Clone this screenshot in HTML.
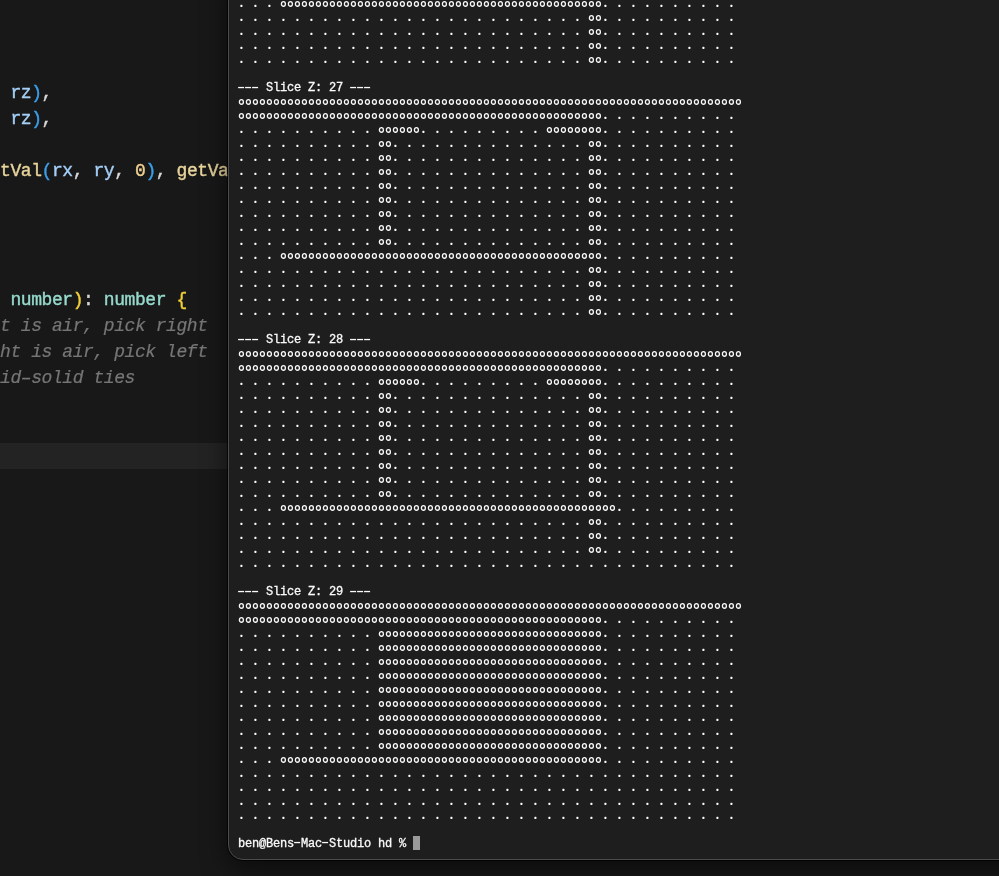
<!DOCTYPE html>
<html><head><meta charset="utf-8">
<style>
html,body{margin:0;padding:0;}
body{width:999px;height:876px;overflow:hidden;position:relative;background:#181818;}
#editor{position:absolute;left:0;top:0;width:999px;height:876px;background:#181818;overflow:hidden;}
#hl{position:absolute;left:0;top:443px;width:999px;height:26px;background:#232323;}
#code{position:absolute;left:0.4px;top:0;font-family:"Liberation Mono",monospace;font-size:18.0px;letter-spacing:-0.420px;line-height:26px;white-space:pre;color:#cccccc;-webkit-text-stroke:0.4px currentColor;will-change:transform;}
.cl{position:absolute;left:0;height:26px;}
.v{color:#a4d0f8} .b{color:#3a9ee8} .p{color:#d8d8d8} .f{color:#e8d49c} .n{color:#efd091}
.t{color:#96dacd} .g{color:#f2cf3a} .c{color:#767676;font-style:italic;-webkit-text-stroke:0.2px currentColor}
#shadow{position:absolute;left:229px;top:-40px;width:900px;height:899px;border-radius:15px;box-shadow:0 8px 24px 3px rgba(0,0,0,0.5);}
#term{position:absolute;left:228px;top:-40px;width:900px;height:900px;box-sizing:border-box;border:1px solid #4c4c4c;border-radius:15px;background:#1e1e1e;overflow:hidden;box-shadow:0 0 0 1px rgba(0,0,0,0.7);}
#tt{position:absolute;left:9px;top:35.97px;font-family:"Liberation Mono",monospace;font-size:11.4px;letter-spacing:0.160px;line-height:14px;white-space:pre;color:#fafafa;-webkit-text-stroke:0.2px currentColor;will-change:transform;}
.l{height:14px;}
.h{-webkit-text-stroke:0.3px currentColor;font-size:12px;letter-spacing:-0.2px;}
#vox{position:absolute;left:0;top:0;}
.cur{display:inline-block;width:7px;height:14px;background:#9a9a9a;vertical-align:-3px;}
</style></head><body>
<div id="editor"><div id="hl"></div><div id="code"><div class="cl" style="top:80.21px"><span class="v"> rz</span><span class="b">)</span><span class="p">,</span></div><div class="cl" style="top:106.06px"><span class="v"> rz</span><span class="b">)</span><span class="p">,</span></div><div class="cl" style="top:157.76px"><span class="f">tVal</span><span class="b">(</span><span class="v">rx</span><span class="p">, </span><span class="v">ry</span><span class="p">, </span><span class="n">0</span><span class="b">)</span><span class="p">, </span><span class="f">getVa</span></div><div class="cl" style="top:287.01px"><span class="t"> number</span><span class="g">)</span><span class="p">: </span><span class="t">number </span><span class="g">{</span></div><div class="cl" style="top:312.86px"><span class="c">t is air, pick right</span></div><div class="cl" style="top:338.71px"><span class="c">ht is air, pick left</span></div><div class="cl" style="top:364.56px"><span class="c">id–solid ties</span></div></div></div>
<div id="shadow"></div>
<div id="term"><div id="tt"><div class="l">&nbsp;</div><div class="l">&nbsp;</div><div class="l">&nbsp;</div><div class="l">&nbsp;</div><div class="l">&nbsp;</div><div class="l">&nbsp;</div><div class="l h">    Slice Z: 27    </div><div class="l">&nbsp;</div><div class="l">&nbsp;</div><div class="l">&nbsp;</div><div class="l">&nbsp;</div><div class="l">&nbsp;</div><div class="l">&nbsp;</div><div class="l">&nbsp;</div><div class="l">&nbsp;</div><div class="l">&nbsp;</div><div class="l">&nbsp;</div><div class="l">&nbsp;</div><div class="l">&nbsp;</div><div class="l">&nbsp;</div><div class="l">&nbsp;</div><div class="l">&nbsp;</div><div class="l">&nbsp;</div><div class="l">&nbsp;</div><div class="l h">    Slice Z: 28    </div><div class="l">&nbsp;</div><div class="l">&nbsp;</div><div class="l">&nbsp;</div><div class="l">&nbsp;</div><div class="l">&nbsp;</div><div class="l">&nbsp;</div><div class="l">&nbsp;</div><div class="l">&nbsp;</div><div class="l">&nbsp;</div><div class="l">&nbsp;</div><div class="l">&nbsp;</div><div class="l">&nbsp;</div><div class="l">&nbsp;</div><div class="l">&nbsp;</div><div class="l">&nbsp;</div><div class="l">&nbsp;</div><div class="l">&nbsp;</div><div class="l h">    Slice Z: 29    </div><div class="l">&nbsp;</div><div class="l">&nbsp;</div><div class="l">&nbsp;</div><div class="l">&nbsp;</div><div class="l">&nbsp;</div><div class="l">&nbsp;</div><div class="l">&nbsp;</div><div class="l">&nbsp;</div><div class="l">&nbsp;</div><div class="l">&nbsp;</div><div class="l">&nbsp;</div><div class="l">&nbsp;</div><div class="l">&nbsp;</div><div class="l">&nbsp;</div><div class="l">&nbsp;</div><div class="l">&nbsp;</div><div class="l">&nbsp;</div><div class="l h" style="position:relative;top:-1px">ben@Bens Mac Studio hd % <span class="cur"></span></div></div></div>
<svg id="vox" width="999" height="876" viewBox="0 0 999 876" fill="#fafafa"><defs><pattern id="po" patternUnits="userSpaceOnUse" x="238" y="10" width="7" height="14"><ellipse cx="3.4" cy="7.9" rx="2.0" ry="2.35" fill="none" stroke="#fafafa" stroke-width="1.3"/></pattern><pattern id="pd" patternUnits="userSpaceOnUse" x="238" y="10" width="14" height="14"><rect x="2.30" y="8.70" width="2.2" height="2.2" rx="0.7" fill="#fafafa"/></pattern></defs><rect x="238" y="-4" width="42" height="14" fill="url(#pd)"/><rect x="280" y="-4" width="322" height="14" fill="url(#po)"/><rect x="602" y="-4" width="140" height="14" fill="url(#pd)"/><rect x="238" y="10" width="350" height="14" fill="url(#pd)"/><rect x="588" y="10" width="14" height="14" fill="url(#po)"/><rect x="602" y="10" width="140" height="14" fill="url(#pd)"/><rect x="238" y="24" width="350" height="14" fill="url(#pd)"/><rect x="588" y="24" width="14" height="14" fill="url(#po)"/><rect x="602" y="24" width="140" height="14" fill="url(#pd)"/><rect x="238" y="38" width="350" height="14" fill="url(#pd)"/><rect x="588" y="38" width="14" height="14" fill="url(#po)"/><rect x="602" y="38" width="140" height="14" fill="url(#pd)"/><rect x="238" y="52" width="350" height="14" fill="url(#pd)"/><rect x="588" y="52" width="14" height="14" fill="url(#po)"/><rect x="602" y="52" width="140" height="14" fill="url(#pd)"/><rect x="238.1" y="86.9" width="6" height="1.3"/><rect x="245.1" y="86.9" width="6" height="1.3"/><rect x="252.1" y="86.9" width="6" height="1.3"/><rect x="350.1" y="86.9" width="6" height="1.3"/><rect x="357.1" y="86.9" width="6" height="1.3"/><rect x="364.1" y="86.9" width="6" height="1.3"/><rect x="238" y="94" width="504" height="14" fill="url(#po)"/><rect x="238" y="108" width="364" height="14" fill="url(#po)"/><rect x="602" y="108" width="140" height="14" fill="url(#pd)"/><rect x="238" y="122" width="140" height="14" fill="url(#pd)"/><rect x="378" y="122" width="42" height="14" fill="url(#po)"/><rect x="420" y="122" width="126" height="14" fill="url(#pd)"/><rect x="546" y="122" width="56" height="14" fill="url(#po)"/><rect x="602" y="122" width="140" height="14" fill="url(#pd)"/><rect x="238" y="136" width="140" height="14" fill="url(#pd)"/><rect x="378" y="136" width="14" height="14" fill="url(#po)"/><rect x="392" y="136" width="196" height="14" fill="url(#pd)"/><rect x="588" y="136" width="14" height="14" fill="url(#po)"/><rect x="602" y="136" width="140" height="14" fill="url(#pd)"/><rect x="238" y="150" width="140" height="14" fill="url(#pd)"/><rect x="378" y="150" width="14" height="14" fill="url(#po)"/><rect x="392" y="150" width="196" height="14" fill="url(#pd)"/><rect x="588" y="150" width="14" height="14" fill="url(#po)"/><rect x="602" y="150" width="140" height="14" fill="url(#pd)"/><rect x="238" y="164" width="140" height="14" fill="url(#pd)"/><rect x="378" y="164" width="14" height="14" fill="url(#po)"/><rect x="392" y="164" width="196" height="14" fill="url(#pd)"/><rect x="588" y="164" width="14" height="14" fill="url(#po)"/><rect x="602" y="164" width="140" height="14" fill="url(#pd)"/><rect x="238" y="178" width="140" height="14" fill="url(#pd)"/><rect x="378" y="178" width="14" height="14" fill="url(#po)"/><rect x="392" y="178" width="196" height="14" fill="url(#pd)"/><rect x="588" y="178" width="14" height="14" fill="url(#po)"/><rect x="602" y="178" width="140" height="14" fill="url(#pd)"/><rect x="238" y="192" width="140" height="14" fill="url(#pd)"/><rect x="378" y="192" width="14" height="14" fill="url(#po)"/><rect x="392" y="192" width="196" height="14" fill="url(#pd)"/><rect x="588" y="192" width="14" height="14" fill="url(#po)"/><rect x="602" y="192" width="140" height="14" fill="url(#pd)"/><rect x="238" y="206" width="140" height="14" fill="url(#pd)"/><rect x="378" y="206" width="14" height="14" fill="url(#po)"/><rect x="392" y="206" width="196" height="14" fill="url(#pd)"/><rect x="588" y="206" width="14" height="14" fill="url(#po)"/><rect x="602" y="206" width="140" height="14" fill="url(#pd)"/><rect x="238" y="220" width="140" height="14" fill="url(#pd)"/><rect x="378" y="220" width="14" height="14" fill="url(#po)"/><rect x="392" y="220" width="196" height="14" fill="url(#pd)"/><rect x="588" y="220" width="14" height="14" fill="url(#po)"/><rect x="602" y="220" width="140" height="14" fill="url(#pd)"/><rect x="238" y="234" width="140" height="14" fill="url(#pd)"/><rect x="378" y="234" width="14" height="14" fill="url(#po)"/><rect x="392" y="234" width="196" height="14" fill="url(#pd)"/><rect x="588" y="234" width="14" height="14" fill="url(#po)"/><rect x="602" y="234" width="140" height="14" fill="url(#pd)"/><rect x="238" y="248" width="42" height="14" fill="url(#pd)"/><rect x="280" y="248" width="322" height="14" fill="url(#po)"/><rect x="602" y="248" width="140" height="14" fill="url(#pd)"/><rect x="238" y="262" width="350" height="14" fill="url(#pd)"/><rect x="588" y="262" width="14" height="14" fill="url(#po)"/><rect x="602" y="262" width="140" height="14" fill="url(#pd)"/><rect x="238" y="276" width="350" height="14" fill="url(#pd)"/><rect x="588" y="276" width="14" height="14" fill="url(#po)"/><rect x="602" y="276" width="140" height="14" fill="url(#pd)"/><rect x="238" y="290" width="350" height="14" fill="url(#pd)"/><rect x="588" y="290" width="14" height="14" fill="url(#po)"/><rect x="602" y="290" width="140" height="14" fill="url(#pd)"/><rect x="238" y="304" width="350" height="14" fill="url(#pd)"/><rect x="588" y="304" width="14" height="14" fill="url(#po)"/><rect x="602" y="304" width="140" height="14" fill="url(#pd)"/><rect x="238.1" y="338.9" width="6" height="1.3"/><rect x="245.1" y="338.9" width="6" height="1.3"/><rect x="252.1" y="338.9" width="6" height="1.3"/><rect x="350.1" y="338.9" width="6" height="1.3"/><rect x="357.1" y="338.9" width="6" height="1.3"/><rect x="364.1" y="338.9" width="6" height="1.3"/><rect x="238" y="346" width="504" height="14" fill="url(#po)"/><rect x="238" y="360" width="364" height="14" fill="url(#po)"/><rect x="602" y="360" width="140" height="14" fill="url(#pd)"/><rect x="238" y="374" width="140" height="14" fill="url(#pd)"/><rect x="378" y="374" width="42" height="14" fill="url(#po)"/><rect x="420" y="374" width="126" height="14" fill="url(#pd)"/><rect x="546" y="374" width="56" height="14" fill="url(#po)"/><rect x="602" y="374" width="140" height="14" fill="url(#pd)"/><rect x="238" y="388" width="140" height="14" fill="url(#pd)"/><rect x="378" y="388" width="14" height="14" fill="url(#po)"/><rect x="392" y="388" width="196" height="14" fill="url(#pd)"/><rect x="588" y="388" width="14" height="14" fill="url(#po)"/><rect x="602" y="388" width="140" height="14" fill="url(#pd)"/><rect x="238" y="402" width="140" height="14" fill="url(#pd)"/><rect x="378" y="402" width="14" height="14" fill="url(#po)"/><rect x="392" y="402" width="196" height="14" fill="url(#pd)"/><rect x="588" y="402" width="14" height="14" fill="url(#po)"/><rect x="602" y="402" width="140" height="14" fill="url(#pd)"/><rect x="238" y="416" width="140" height="14" fill="url(#pd)"/><rect x="378" y="416" width="14" height="14" fill="url(#po)"/><rect x="392" y="416" width="196" height="14" fill="url(#pd)"/><rect x="588" y="416" width="14" height="14" fill="url(#po)"/><rect x="602" y="416" width="140" height="14" fill="url(#pd)"/><rect x="238" y="430" width="140" height="14" fill="url(#pd)"/><rect x="378" y="430" width="14" height="14" fill="url(#po)"/><rect x="392" y="430" width="196" height="14" fill="url(#pd)"/><rect x="588" y="430" width="14" height="14" fill="url(#po)"/><rect x="602" y="430" width="140" height="14" fill="url(#pd)"/><rect x="238" y="444" width="140" height="14" fill="url(#pd)"/><rect x="378" y="444" width="14" height="14" fill="url(#po)"/><rect x="392" y="444" width="196" height="14" fill="url(#pd)"/><rect x="588" y="444" width="14" height="14" fill="url(#po)"/><rect x="602" y="444" width="140" height="14" fill="url(#pd)"/><rect x="238" y="458" width="140" height="14" fill="url(#pd)"/><rect x="378" y="458" width="14" height="14" fill="url(#po)"/><rect x="392" y="458" width="196" height="14" fill="url(#pd)"/><rect x="588" y="458" width="14" height="14" fill="url(#po)"/><rect x="602" y="458" width="140" height="14" fill="url(#pd)"/><rect x="238" y="472" width="140" height="14" fill="url(#pd)"/><rect x="378" y="472" width="14" height="14" fill="url(#po)"/><rect x="392" y="472" width="196" height="14" fill="url(#pd)"/><rect x="588" y="472" width="14" height="14" fill="url(#po)"/><rect x="602" y="472" width="140" height="14" fill="url(#pd)"/><rect x="238" y="486" width="140" height="14" fill="url(#pd)"/><rect x="378" y="486" width="14" height="14" fill="url(#po)"/><rect x="392" y="486" width="196" height="14" fill="url(#pd)"/><rect x="588" y="486" width="14" height="14" fill="url(#po)"/><rect x="602" y="486" width="140" height="14" fill="url(#pd)"/><rect x="238" y="500" width="42" height="14" fill="url(#pd)"/><rect x="280" y="500" width="336" height="14" fill="url(#po)"/><rect x="616" y="500" width="126" height="14" fill="url(#pd)"/><rect x="238" y="514" width="350" height="14" fill="url(#pd)"/><rect x="588" y="514" width="14" height="14" fill="url(#po)"/><rect x="602" y="514" width="140" height="14" fill="url(#pd)"/><rect x="238" y="528" width="350" height="14" fill="url(#pd)"/><rect x="588" y="528" width="14" height="14" fill="url(#po)"/><rect x="602" y="528" width="140" height="14" fill="url(#pd)"/><rect x="238" y="542" width="350" height="14" fill="url(#pd)"/><rect x="588" y="542" width="14" height="14" fill="url(#po)"/><rect x="602" y="542" width="140" height="14" fill="url(#pd)"/><rect x="238" y="556" width="504" height="14" fill="url(#pd)"/><rect x="238.1" y="590.9" width="6" height="1.3"/><rect x="245.1" y="590.9" width="6" height="1.3"/><rect x="252.1" y="590.9" width="6" height="1.3"/><rect x="350.1" y="590.9" width="6" height="1.3"/><rect x="357.1" y="590.9" width="6" height="1.3"/><rect x="364.1" y="590.9" width="6" height="1.3"/><rect x="238" y="598" width="504" height="14" fill="url(#po)"/><rect x="238" y="612" width="364" height="14" fill="url(#po)"/><rect x="602" y="612" width="140" height="14" fill="url(#pd)"/><rect x="238" y="626" width="140" height="14" fill="url(#pd)"/><rect x="378" y="626" width="224" height="14" fill="url(#po)"/><rect x="602" y="626" width="140" height="14" fill="url(#pd)"/><rect x="238" y="640" width="140" height="14" fill="url(#pd)"/><rect x="378" y="640" width="224" height="14" fill="url(#po)"/><rect x="602" y="640" width="140" height="14" fill="url(#pd)"/><rect x="238" y="654" width="140" height="14" fill="url(#pd)"/><rect x="378" y="654" width="224" height="14" fill="url(#po)"/><rect x="602" y="654" width="140" height="14" fill="url(#pd)"/><rect x="238" y="668" width="140" height="14" fill="url(#pd)"/><rect x="378" y="668" width="224" height="14" fill="url(#po)"/><rect x="602" y="668" width="140" height="14" fill="url(#pd)"/><rect x="238" y="682" width="140" height="14" fill="url(#pd)"/><rect x="378" y="682" width="224" height="14" fill="url(#po)"/><rect x="602" y="682" width="140" height="14" fill="url(#pd)"/><rect x="238" y="696" width="140" height="14" fill="url(#pd)"/><rect x="378" y="696" width="224" height="14" fill="url(#po)"/><rect x="602" y="696" width="140" height="14" fill="url(#pd)"/><rect x="238" y="710" width="140" height="14" fill="url(#pd)"/><rect x="378" y="710" width="224" height="14" fill="url(#po)"/><rect x="602" y="710" width="140" height="14" fill="url(#pd)"/><rect x="238" y="724" width="140" height="14" fill="url(#pd)"/><rect x="378" y="724" width="224" height="14" fill="url(#po)"/><rect x="602" y="724" width="140" height="14" fill="url(#pd)"/><rect x="238" y="738" width="140" height="14" fill="url(#pd)"/><rect x="378" y="738" width="224" height="14" fill="url(#po)"/><rect x="602" y="738" width="140" height="14" fill="url(#pd)"/><rect x="238" y="752" width="42" height="14" fill="url(#pd)"/><rect x="280" y="752" width="322" height="14" fill="url(#po)"/><rect x="602" y="752" width="140" height="14" fill="url(#pd)"/><rect x="238" y="766" width="504" height="14" fill="url(#pd)"/><rect x="238" y="780" width="504" height="14" fill="url(#pd)"/><rect x="238" y="794" width="504" height="14" fill="url(#pd)"/><rect x="238" y="808" width="504" height="14" fill="url(#pd)"/><rect x="294.1" y="841.9" width="6" height="1.3"/><rect x="322.1" y="841.9" width="6" height="1.3"/></svg>
</body></html>
